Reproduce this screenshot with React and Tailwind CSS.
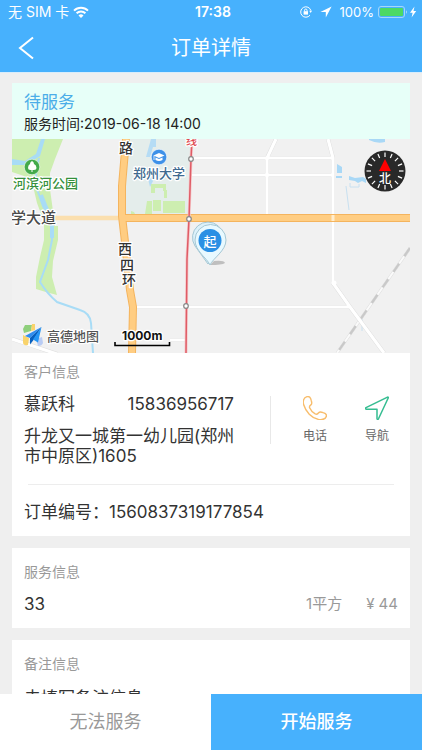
const order = {
    status: "待服务",
    time: "2019-06-18 14:00",
    customer: "慕跃科",
    phone: "15836956717",
    address: "升龙又一城第一幼儿园(郑州市中原区)1605",
    number: "1560837319177854",
    service: { name: "33", amount: "1平方", price: "¥ 44" },
    remark: "未填写备注信息",
};

const ticks = [0, 22.5, 45, 67.5, 90, 112.5, 135, 157.5, 180, 202.5, 225, 247.5, 270, 292.5, 315, 337.5];

function StatusBar() {
    return (
        <div className="grid h-6 grid-cols-[1fr_auto_1fr] items-center pr-1 pl-2 text-sm">
            <div className="flex items-center gap-1">
                <span>无 SIM 卡</span>
                <svg className="h-3 w-4" viewBox="0 0 16 12" fill="none" stroke="currentColor" strokeWidth="2">
                    <path d="M1 4.6a10 10 0 0 1 14 0" />
                    <path d="M3.6 7.3a6.3 6.3 0 0 1 8.8 0" />
                    <path d="M8 12 5.5 9.4a3.6 3.6 0 0 1 5 0z" fill="currentColor" stroke="none" />
                </svg>
            </div>
            <span className="font-semibold">17:38</span>
            <div className="flex items-center justify-end">
                <svg className="mr-2 h-3 w-3" viewBox="0 0 12 12" fill="none" stroke="currentColor">
                    <path d="M10.9 4.6A5.2 5.2 0 1 0 10 9.2" />
                    <path d="M9.2 4.8h2.8L10.7 7z" fill="currentColor" stroke="none" />
                    <rect x="3.6" y="5.2" width="4.4" height="3.4" fill="currentColor" stroke="none" />
                    <path d="M4.6 5.4V4.2a1.2 1.2 0 0 1 2.4 0v1.2" />
                </svg>
                <svg className="mr-2 h-3 w-3" viewBox="0 0 12 12" fill="currentColor">
                    <path d="M11.6.4.4 6h5.4v5.6z" />
                </svg>
                <span className="mr-1 text-[13px]">100%</span>
                <svg className="h-3 w-10" viewBox="0 0 40 12">
                    <rect x=".5" y=".5" width="26" height="11" rx="2.5" fill="none" stroke="#a5d8fb" />
                    <rect x="2" y="2" width="23" height="8" rx="1" fill="#4cd964" />
                    <path d="M28 4.2c1.4.6 1.4 3 0 3.6z" fill="#a5d8fb" />
                    <path d="M36.5.5 32 6.8h2.6l-1 4.7 4.6-6.6h-2.7z" fill="currentColor" />
                </svg>
            </div>
        </div>
    );
}

function Station({ x, y }) {
    return <circle cx={x} cy={y} r="2.3" fill="#fff" stroke="#888" strokeWidth="1.2" />;
}

function OrderMap() {
    return (
        <svg
            className="block h-[214px] w-full bg-[#f1f1f1] font-medium"
            viewBox="0 0 398 214"
            preserveAspectRatio="xMidYMid slice"
            role="img"
            aria-label="地图"
        >
            {/* Parque y río */}
            <path d="M0 0H51L43 20 38 34 38 50 43 87H46V101L41 122 40 138 45 156Q33 153 24 150V138L28 118 32 101V83L25 64 21 47 12 37 0 33Z" fill="#cdeeb0" />
            <path d="M33 0 28 17Q22 21 13 26H0V20L13 22 24 15 29 0Z" fill="#a8dcf6" />
            <path d="M27 19Q22 36 25 50L31 67 39 83 40 101 36 121 28 143C33 151 39 158 45 163L68 171Q78 174 79 184L81 214" fill="none" stroke="#a8dcf6" strokeWidth="2" />
            <path d="M29 56 33 66 40 82 40 99" fill="none" stroke="#a8dcf6" strokeWidth="4" />

            {/* Universidad */}
            <path d="M117 0H180L178 77H112Z" fill="#e4edeb" />
            <path d="M139 0h5v8h-3l-3 10h-4zM136 40l4-8 3 6-5 10" fill="#b5dcf5" />
            <path d="M139 45h15v7h-3v-3h-8v5h-4zM152 51h3v8h-3zM135 62h5v13h-7zM141 61h8v11h-8zM151 62h22v12h-22z" fill="#cdeeb0" />
            <path d="M119 75v-3l3 1 1 2z" fill="#cdeeb0" />

            {/* Lagos */}
            <path d="M357 0h16v3q-8 2-16-2zM325 25l5 3v6h-5zM324 37h6v2h-6zM337 37l6 2 8-1 3 2v4l-4-2-4 2-3-2-6-1z" fill="#a9d8f6" />
            <path d="M338 44v4h9v-3M334 47l3 24M350 177v15" fill="none" stroke="#c8e0f0" />

            {/* Tren */}
            <path d="M398 109 325 214" stroke="#dedede" strokeWidth="3" />
            <path d="M398 109 325 214" stroke="#fafafa" strokeWidth="2" />
            <path d="M398 109 325 214" stroke="#c9c9c9" strokeWidth="2.4" strokeDasharray="10 9" />
            <path d="M107 53V75" stroke="#ccc" strokeDasharray="3 2" />

            {/* Calles blancas */}
            <g fill="none" stroke="#dcdcdc" strokeWidth="4">
                <path d="M179 19H321M179 36H321M264 0 255 19V77M121 168H338M158 201H174M0 200 45 215M316 0 321 19V144L338 168 372 214" />
            </g>
            <g fill="none" stroke="#fff" strokeWidth="3.2">
                <path d="M179 19H321M179 36H321M264 0 255 19V77M121 168H338M158 201H174M0 200 45 215M316 0 321 19V144L338 168 372 214" />
            </g>
            <circle cx="322" cy="144" r="2.5" fill="#fff" />

            {/* Avenidas */}
            <path d="M40 79H110" stroke="#fbdfae" strokeWidth="4.5" />
            <g fill="none" stroke="#f4b45e" strokeWidth="8">
                <path d="M110 79H398" />
                <path d="M114 0 110 47V77L113 103 118 151 121 168 120 214" />
            </g>
            <g fill="none" stroke="#ffcd82" strokeWidth="6">
                <path d="M110 79H398" />
                <path d="M114 0 110 47V77L113 103 118 151 121 168 120 214" />
            </g>
            <path d="M321 76V82" stroke="#ffedcf" strokeWidth="3" />

            {/* Línea de metro */}
            <path d="M180 0 179 20 177 80 175 120 174 214" fill="none" stroke="#f6c9cb" strokeWidth="3" />
            <path d="M180 0 179 20 177 80 175 120 174 214" fill="none" stroke="#df5c66" strokeWidth="1.5" />
            <Station x="179" y="20" />
            <Station x="177" y="80" />
            <Station x="174" y="167" />

            {/* Textos */}
            <g stroke="#fff" strokeWidth="2.5" paintOrder="stroke" strokeLinejoin="round">
                <text x="1" y="49" fontSize="13" fill="#35903b">河滨河公园</text>
                <text x="121" y="39" fontSize="13" fill="#406a8f">郑州大学</text>
                <text x="-1" y="84" fontSize="15" fill="#4b4b4b">学大道</text>
                <g fontSize="14" fill="#333">
                    <text x="107" y="14">路</text>
                    <text x="106" y="115">西</text>
                    <text x="108" y="131">四</text>
                    <text x="110" y="146">环</text>
                </g>
                <text x="174" y="6" fontSize="11" fill="#e0454d">线</text>
                <text x="35" y="202" fontSize="13" fill="#555">高德地图</text>
                <text x="110" y="201" fontSize="12" fontWeight="700" fill="#111">1000m</text>
            </g>
            <path d="M103 203V206.5H157.5V203" fill="none" stroke="#000" strokeWidth="1.6" />

            <circle cx="20" cy="28" r="7.8" fill="#43aa4b" stroke="#fff" strokeWidth=".6" />
            <path d="M20 22q-2 1-2 3-2 1-2 4 0 2 2.5 2H19.5V33h1V31h1.5q2.5 0 2.5-2 0-3-2.5-4 0-2-2-3z" fill="#fff" />
            <circle cx="147" cy="18" r="7.8" fill="#3e91e8" stroke="#fff" strokeWidth=".6" />
            <path d="M141.5 16.5 147 14l5.5 2.5L147 19zM143.500 18.500 147 20l3.5-1.5V21q-3.5 2-7 0z" fill="#fff" />
            <path d="M142 16.5V21" stroke="#fff" strokeWidth=".8" />

            {/* Logo del mapa */}
            <path d="M13 186h7l-1 6-7 2-1-4z" fill="#8fd07c" />
            <path d="M20 185h3v6l-4 1zM11 196l6 3-1 7q-5 1-5-3z" fill="#f9d36b" />
            <path d="M24 200l6-2 1 6q-1 3-5 3z" fill="#b9ccf4" />
            <path d="M29.5 188 13 197l5 2z" fill="#2f8df0" />
            <path d="M29.5 188 18 199v6.5l3.5-4.5z" fill="#075fbe" />
            <path d="M29.5 188 21 200.5l5 3z" fill="#2496f5" />

            {/* Brújula */}
            <circle cx="373" cy="32" r="20.5" fill="#292929" />
            {ticks.map((t) => (
                <path key={t} d="M373 13.5V18" stroke="#fff" strokeWidth="1.2" transform={`rotate(${t} 373 32)`} />
            ))}
            <path d="M373 20 379 32H367Z" fill="#f00" />
            <text x="373" y="44" fontSize="12" fill="#fff" textAnchor="middle">北</text>

            {/* Punto de inicio */}
            <path d="M198 126 202 122Q212 121 213 124 210 126 198 126Z" fill="#a9a9a9" opacity=".7" />
            <path d="M196 125 183 107A15.500 15.500 0 1 1 209 107Z" fill="#dcf1fa" stroke="#a5c7d4" strokeLinejoin="round" />
            <path d="M198 126C195 119 183 112 183 101a15.500 15.500 0 0 1 31 0C214 112 201 119 198 126Z" fill="#e8f9ff" stroke="#a5c7d4" />
            <circle cx="198" cy="101.5" r="11.5" fill="#2b90e4" />
            <text x="198" y="106.5" fontSize="13" fill="#fff" textAnchor="middle">起</text>
        </svg>
    );
}

function App() {
    return (
        <div className="flex h-screen flex-col bg-[#efefef] font-['Inter','Noto_Sans_CJK_SC',sans-serif] text-[17px] text-[#333]">
            <header className="shrink-0 border-b border-[#d9edfb] bg-[#47b1fd] text-white">
                <StatusBar />
                <div className="grid h-12 grid-cols-[1fr_auto_1fr] items-center">
                    <button type="button" aria-label="返回" className="w-12 pl-4">
                        <svg className="h-6 w-5" viewBox="0 0 20 24" fill="none" stroke="currentColor" strokeWidth="2">
                            <path d="M17 1.5 4 12 17 22.5" />
                        </svg>
                    </button>
                    <h1 className="text-xl">订单详情</h1>
                </div>
            </header>

            <main className="min-h-0 flex-1 space-y-3 overflow-y-auto px-3 pt-2.5 [scrollbar-width:none]">
                <section className="bg-white">
                    <div className="h-14 bg-[#e7fff8] px-3 pt-[7px]">
                        <h2 className="leading-6 text-[#4bade8]">{order.status}</h2>
                        <p className="text-sm text-[#222]">服务时间:{order.time}</p>
                    </div>
                    <OrderMap />
                    <div className="px-3 pt-[9px] pb-3">
                        <h3 className="text-sm text-[#999]">客户信息</h3>
                        <div className="mt-2.5 flex">
                            <div className="min-w-0 flex-1">
                                <div className="flex justify-between pr-9 leading-6">
                                    <span>{order.customer}</span>
                                    <span>{order.phone}</span>
                                </div>
                                <p className="mt-2.5 pr-6 leading-5 break-all">{order.address}</p>
                            </div>
                            <div className="mt-1 flex h-12 w-32 shrink-0 gap-[22px] border-l border-[#e8e8e8] pl-6 text-xs text-[#666]">
                                <button type="button" className="flex w-10 flex-col items-center justify-between">
                                    <svg className="h-6 w-6" viewBox="0 0 24 24" fill="none" stroke="#f8bd6c" strokeWidth="1.4" strokeLinejoin="round">
                                        <path d="M3.5.8C1.300 1.500-.6 4.500.6 8.500 2.800 15.800 8.500 22 15.500 23.400c4 .6 7.200-.8 7.900-3.100.5-2-1-3-3.200-3.700-2.200-.8-3.500-1.200-4.500.1-.8 1.300-1.800 2-3.500 1.100-2.600-1.500-4.600-3.700-5.600-6.100-.6-1.500.3-2.100 1.300-2.800 1.400-1 1-2.400.4-4.200C7.700 2 6.500-.2 3.500.8Z" />
                                    </svg>
                                    电话
                                </button>
                                <button type="button" className="flex w-10 flex-col items-center justify-between">
                                    <svg className="h-6 w-6" viewBox="0 0 24 24" fill="none" stroke="#35bd91" strokeWidth="1.5" strokeLinejoin="round">
                                        <path d="M22.500 1.200c.7-.3 1 .1.700.8L13.500 22.800c-.5.900-1.500.7-1.500-.3V13.200H1.400C.4 13.200.3 12.200 1 11.700Z" />
                                    </svg>
                                    导航
                                </button>
                            </div>
                        </div>
                        <hr className="mx-1 mt-[18px] border-[#ededed]" />
                        <p className="mt-[15px] leading-6">订单编号：{order.number}</p>
                    </div>
                </section>

                <section className="bg-white px-3 pt-3.5 pb-3">
                    <h3 className="text-sm text-[#999]">服务信息</h3>
                    <div className="mt-2.5 flex leading-6">
                        <span className="flex-1">{order.service.name}</span>
                        <span className="text-[15px] text-[#999]">{order.service.amount}</span>
                        <span className="ml-6 text-[15px] text-[#999]">{order.service.price}</span>
                    </div>
                </section>

                <section className="bg-white px-3 pt-3.5 pb-3">
                    <h3 className="text-sm text-[#999]">备注信息</h3>
                    <p className="mt-3 leading-6">{order.remark}</p>
                </section>
            </main>

            <footer className="grid h-14 shrink-0 grid-cols-2 text-lg">
                <button type="button" className="bg-white text-[#999]">无法服务</button>
                <button type="button" className="bg-[#47b1fd] font-medium text-white">开始服务</button>
            </footer>
        </div>
    );
}

export default App;
